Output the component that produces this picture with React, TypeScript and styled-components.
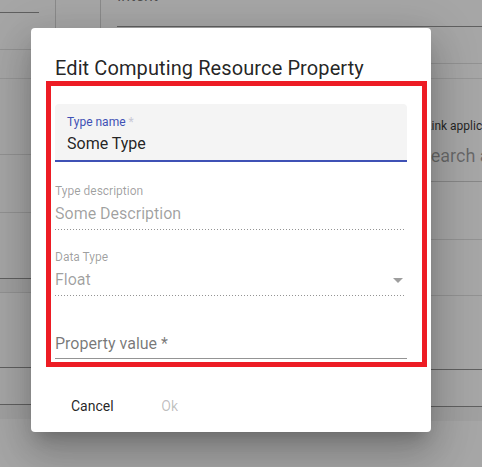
import React from "react";
import styled, { createGlobalStyle } from "styled-components";

const GlobalStyle = createGlobalStyle`
  html, body { margin: 0; padding: 0; }
  body { font-family: Roboto, "Liberation Sans", Arial, sans-serif; background: #fff; }
  * { box-sizing: border-box; }
`;

const Page = styled.div`
  position: relative;
  width: 482px;
  height: 467px;
  overflow: hidden;
  background: #fff;
`;

/* ---------- background page (under the backdrop) ---------- */

const TopSection = styled.div`
  display: flex;
  height: 79px;
  border-bottom: 1px solid #e6e6e6;
`;

const SideCell = styled.div<{ $w: number }>`
  flex: none;
  width: ${(p) => p.$w}px;
  border-right: 1px solid #d4d4d4;
  display: flex;
  flex-direction: column;
`;

const MainCell = styled.div`
  flex: 1;
  padding-left: 16px;
  display: flex;
  flex-direction: column;
`;

const Band = styled.div<{ $h: number; $line?: "dark" | "light" | "none"; $shade?: boolean }>`
  flex: none;
  height: ${(p) => p.$h}px;
  background: ${(p) => (p.$shade ? "#f6f6f6" : "transparent")};
  border-bottom: 1px solid
    ${(p) =>
      p.$line === "dark" ? "rgba(0,0,0,0.42)" : p.$line === "none" ? "transparent" : "#e0e0e0"};
`;

const StubField = styled.div`
  width: 39px;
  height: 13px;
  border-bottom: 1px solid rgba(0, 0, 0, 0.42);
`;

const IntentField = styled.div`
  margin-top: -14px;
  height: 41px;
  border-bottom: 1px solid rgba(0, 0, 0, 0.42);
  font-size: 16px;
  line-height: 19px;
  color: rgba(0, 0, 0, 0.54);
`;

const MiddleSection = styled.div`
  display: flex;
`;

const LeftPane = styled.div`
  flex: none;
  width: 424px;
  display: flex;
  flex-direction: column;
`;

const RightPane = styled.div`
  flex: 1;
  display: flex;
  flex-direction: column;
`;

const SearchBlock = styled.div`
  height: 103px;
  border-bottom: 1px solid #cfcfcf;
  padding-top: 40px;
  display: flex;
  flex-direction: column;
`;

const SmallCaption = styled.div`
  margin-left: 1px;
  font-size: 12px;
  line-height: 15px;
  color: rgba(0, 0, 0, 0.8);
  white-space: nowrap;
`;

const SearchPlaceholder = styled.div`
  margin-top: 11px;
  margin-left: -4px;
  font-size: 18px;
  line-height: 21px;
  color: rgba(0, 0, 0, 0.38);
  white-space: nowrap;
`;

const Backdrop = styled.div`
  position: absolute;
  inset: 0;
  background: rgba(0, 0, 0, 0.35);
`;

/* ---------- dialog ---------- */

const Dialog = styled.div`
  position: absolute;
  left: 31px;
  top: 28px;
  width: 400px;
  background: #fff;
  border-radius: 4px;
  box-shadow: 0px 11px 15px -7px rgba(0, 0, 0, 0.2), 0px 24px 38px 3px rgba(0, 0, 0, 0.14),
    0px 9px 46px 8px rgba(0, 0, 0, 0.12);
  display: flex;
  flex-direction: column;
`;

const Title = styled.h2`
  margin: 0;
  padding: 28px 24px 1px;
  font-size: 20px;
  line-height: 24px;
  font-weight: 400;
  letter-spacing: 0.1px;
  color: rgba(0, 0, 0, 0.87);
  white-space: nowrap;
`;

const Annotated = styled.div`
  margin: 0 4px 0 15px;
  border: 5px solid #ed1c24;
  padding: 0 15px 0 4px;
  display: flex;
  flex-direction: column;
`;

const FilledField = styled.div`
  margin-top: 18px;
  height: 58px;
  background: #f4f4f4;
  border-radius: 4px 4px 0 0;
  border-bottom: 2px solid #3f51b5;
  padding: 12px 12px 0;
  display: flex;
  flex-direction: column;
`;

const FilledLabel = styled.label`
  font-size: 12px;
  line-height: 12px;
  color: #3f51b5;
`;

const Asterisk = styled.span`
  color: #c8c8d4;
`;

const FilledValue = styled.div`
  margin-top: 6px;
  font-size: 16px;
  line-height: 19px;
  color: rgba(0, 0, 0, 0.87);
`;

const Field = styled.div<{ $gap: number }>`
  margin-top: ${(p) => p.$gap}px;
  margin-right: 3px;
  padding-bottom: 7px;
  display: flex;
  flex-direction: column;
  background-image: linear-gradient(to right, rgba(0, 0, 0, 0.42) 1px, transparent 1px);
  background-size: 3px 1px;
  background-repeat: repeat-x;
  background-position: left bottom;
`;

const FieldLabel = styled.label`
  font-size: 12px;
  line-height: 12px;
  color: rgba(0, 0, 0, 0.38);
`;

const FieldValue = styled.div`
  position: relative;
  margin-top: 7px;
  font-size: 16px;
  line-height: 19px;
  color: rgba(0, 0, 0, 0.38);
`;

const ArrowIcon = styled.svg`
  position: absolute;
  right: -6px;
  top: -2px;
  width: 24px;
  height: 24px;
  fill: rgba(0, 0, 0, 0.38);
`;

const PlainField = styled.div`
  margin-top: 38px;
  margin-bottom: 3px;
  padding-bottom: 5px;
  border-bottom: 1px solid rgba(0, 0, 0, 0.42);
  font-size: 16px;
  line-height: 19px;
  color: rgba(0, 0, 0, 0.54);
`;

const Actions = styled.div`
  display: flex;
  gap: 8px;
  padding: 21px 8px 8px 24px;
`;

const TextButton = styled.button<{ $disabled?: boolean }>`
  min-width: 64px;
  height: 36px;
  padding: 6px 16px;
  border: none;
  background: transparent;
  border-radius: 4px;
  font-family: inherit;
  font-size: 14px;
  line-height: 24px;
  font-weight: 400;
  color: ${(p) => (p.$disabled ? "rgba(0,0,0,0.26)" : "rgba(0,0,0,0.87)")};
  cursor: ${(p) => (p.$disabled ? "default" : "pointer")};
`;

export default function App() {
  return (
    <Page>
      <GlobalStyle />
      <TopSection>
        <SideCell $w={56}>
          <StubField />
          <Band $h={37} $line="light" />
        </SideCell>
        <SideCell $w={45} />
        <MainCell>
          <IntentField>Intent</IntentField>
          <Band $h={37} $line="light" />
        </MainCell>
      </TopSection>
      <MiddleSection>
        <LeftPane>
          <Band $h={76} $line="light" />
          <Band $h={58} $line="light" />
          <Band $h={66} $line="dark" />
          <Band $h={14} $line="light" $shade />
          <Band $h={75} $line="dark" />
          <Band $h={37} $line="dark" />
          <Band $h={14} $line="none" $shade />
        </LeftPane>
        <RightPane>
          <SearchBlock>
            <SmallCaption>Link applications</SmallCaption>
            <SearchPlaceholder>Search applications</SearchPlaceholder>
          </SearchBlock>
          <Band $h={58} $line="light" />
          <Band $h={56} $line="light" />
          <Band $h={74} $line="dark" />
          <Band $h={37} $line="dark" />
          <Band $h={14} $line="none" $shade />
        </RightPane>
      </MiddleSection>
      <Backdrop />
      <Dialog role="dialog">
        <Title>Edit Computing Resource Property</Title>
        <Annotated>
          <FilledField>
            <FilledLabel>
              Type name <Asterisk>*</Asterisk>
            </FilledLabel>
            <FilledValue>Some Type</FilledValue>
          </FilledField>
          <Field $gap={23}>
            <FieldLabel>Type description</FieldLabel>
            <FieldValue>Some Description</FieldValue>
          </Field>
          <Field $gap={21}>
            <FieldLabel>Data Type</FieldLabel>
            <FieldValue>
              Float
              <ArrowIcon viewBox="0 0 24 24">
                <path d="M7 10l5 5 5-5z" />
              </ArrowIcon>
            </FieldValue>
          </Field>
          <PlainField>Property value *</PlainField>
        </Annotated>
        <Actions>
          <TextButton>Cancel</TextButton>
          <TextButton $disabled>Ok</TextButton>
        </Actions>
      </Dialog>
    </Page>
  );
}
